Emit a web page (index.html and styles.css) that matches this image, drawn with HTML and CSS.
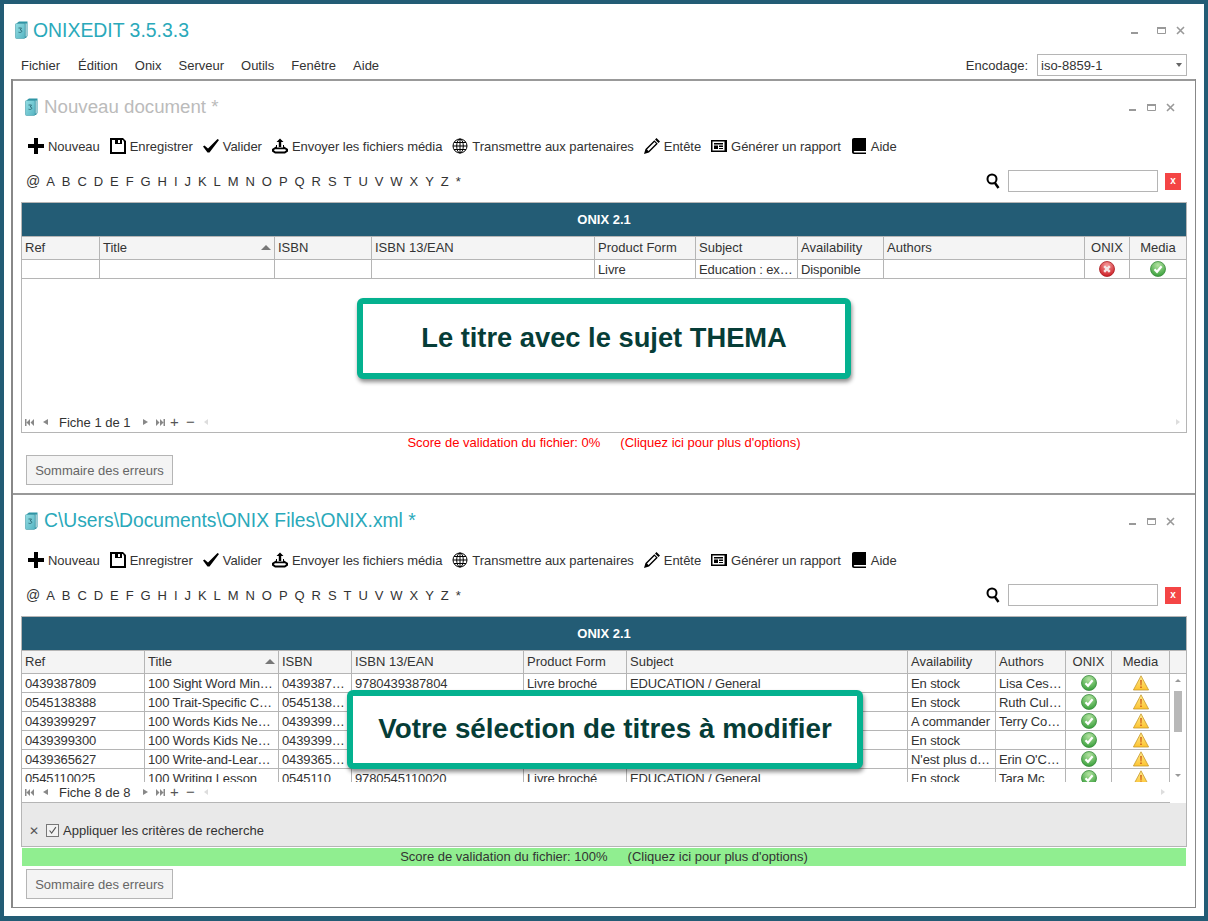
FILE: index.html
```html
<!DOCTYPE html>
<html>
  <head>
    <title>ONIXEDIT 3.5.3.3</title>
    <link rel="stylesheet" href="styles.css">
  </head>
  <body>
    <svg class="defs" width="0" height="0">
      <defs>
        <linearGradient id="book-fill" x1="0" y1="0" x2="1" y2="1"><stop offset="0" stop-color="#93dde3"/><stop offset="1" stop-color="#55b4c2"/></linearGradient>
        <radialGradient id="ok-fill" cx="0.5" cy="0.25" r="0.8"><stop offset="0" stop-color="#b5e4a3"/><stop offset="1" stop-color="#2f9a33"/></radialGradient>
        <radialGradient id="ko-fill" cx="0.5" cy="0.25" r="0.8"><stop offset="0" stop-color="#f59a9a"/><stop offset="1" stop-color="#c9141c"/></radialGradient>
        <linearGradient id="warn-fill" x1="0" y1="0" x2="0" y2="1"><stop offset="0" stop-color="#ffe98a"/><stop offset="1" stop-color="#fdc431"/></linearGradient>
        <symbol id="i-book3" viewBox="0 0 13 18">
          <path d="M2 2 4 .5h8.500V15L11 17H2z" fill="#2f95a5"/>
          <rect x="10.500" y="2.500" width="1.200" height="13" fill="#cfe6e8"/>
          <rect x="0.500" y="2.500" width="9.500" height="15" rx="1" fill="url(#book-fill)" stroke="#4a9dab" stroke-width=".6"/>
          <path d="M3.500 7h3L5.200 9c1.300 0 1.600.6 1.600 1.300 0 1.200-1.900 1.500-3.300.9" fill="none" stroke="#27616c" stroke-width=".8"/>
        </symbol>
        <symbol id="i-min" viewBox="0 0 9 9"><rect x="1" y="6" width="7" height="2" fill="#999"/></symbol>
        <symbol id="i-max" viewBox="0 0 9 9"><path d="M.5 1.500h8v6h-8z" fill="none" stroke="#999"/><rect y="1" width="9" height="2" fill="#999"/></symbol>
        <symbol id="i-close" viewBox="0 0 9 9"><path d="M1 1l7 7M8 1 1 8" stroke="#999" stroke-width="1.600" fill="none"/></symbol>
        <symbol id="i-plus" viewBox="0 0 16 16"><path d="M6 0h4v6h6v4h-6v6H6v-6H0V6h6z"/></symbol>
        <symbol id="i-save" viewBox="0 0 16 16"><path fill-rule="evenodd" d="M0 0h13l3 3v13H0zM2 2v12h12V4l-1-2h-1v4H5V2zM8 2v3h2V2z"/></symbol>
        <symbol id="i-check" viewBox="0 0 16 16"><path d="M0 8.500 1.500 7.500l3.500 3L14.500 1 16 2 6.500 14.500h-2z"/></symbol>
        <symbol id="i-upload" viewBox="0 0 16 16"><path d="M8 0.500l3.500 3.500H9.200v5H6.800V4H4.500z"/><path fill-rule="evenodd" d="M4 7v1.500L0 11v2.500L3 15.500h10l3-2V11l-4-2.500V7H11v2.500H5V7zM3 11.200h10l1.200 1-1.700 1.300h-9l-1.700-1.300z"/></symbol>
        <symbol id="i-globe" viewBox="0 0 16 16"><g fill="none" stroke="#000"><circle cx="8" cy="8" r="7"/><ellipse cx="8" cy="8" rx="3.300" ry="7"/><path d="M8 1v14M1 8h14M2 4.500h12M2 11.500h12"/></g></symbol>
        <symbol id="i-pencil" viewBox="0 0 16 16"><path d="M12.500 0 16 3.500 14.500 5 11 1.500zM10.300 2.200l3.500 3.500L5 14.500 0 16l1.500-5zM3 11.500l1.500 1.500 7.500-7.500L10.500 4z" fill-rule="evenodd"/></symbol>
        <symbol id="i-news" viewBox="0 0 16 16"><path fill-rule="evenodd" d="M0 2h16v12H0zM1.500 3.500v9h12v-9zM3 5h9v1.500H3zM3 7.500h4v3.500H3zM8 7.500h4V9H8zM8 10h4v1H8z"/></symbol>
        <symbol id="i-help" viewBox="0 0 16 16"><path d="M3 0h12v13H3.500c-1 0-1 1.500 0 1.500H15V16H3c-1.200 0-2-.7-2-2V2c0-1.200.8-2 2-2z"/></symbol>
        <symbol id="i-search" viewBox="0 0 15 16"><circle cx="6" cy="6" r="4.500" fill="none" stroke="#000" stroke-width="2"/><path d="M9 10l3.500 5" stroke="#000" stroke-width="2.400"/></symbol>
        <symbol id="i-ok" viewBox="0 0 16 16"><circle cx="8" cy="8" r="7.500" fill="url(#ok-fill)" stroke="#3b8b3d" stroke-width=".8"/><path d="M4.500 8.200 7 10.800l4.600-5.600" fill="none" stroke="#fff" stroke-width="2.200"/></symbol>
        <symbol id="i-ko" viewBox="0 0 16 16"><circle cx="8" cy="8" r="7.500" fill="url(#ko-fill)" stroke="#a81a1f" stroke-width=".8"/><path d="M5.200 5.200l5.600 5.600M10.800 5.200l-5.600 5.600" fill="none" stroke="#f4e6e6" stroke-width="2.400"/></symbol>
        <symbol id="i-warn" viewBox="0 0 16 16"><path d="M8 .8 15.600 15H.4z" fill="url(#warn-fill)" stroke="#c79a2e" stroke-width=".8"/><path d="M7.200 5h1.600l-.3 5.500h-1zM7.200 11.500h1.600V13H7.200z" fill="#d0621c"/></symbol>
        <symbol id="i-first" viewBox="0 0 9 7"><path d="M0 0h1.500v7H0zM5 0v7L1.500 3.500zM9 0v7L5.500 3.500z" fill="#888"/></symbol>
        <symbol id="i-last" viewBox="0 0 9 7"><path d="M9 0H7.500v7H9zM4 0v7l3.500-3.500zM0 0v7l3.500-3.500z" fill="#888"/></symbol>
      </defs>
    </svg>

    <div class="frame">
      <div class="app-title">
        <svg class="book"><use href="#i-book3"/></svg>
        <span class="app-name">ONIXEDIT 3.5.3.3</span>
        <div class="win-btns">
          <svg><use href="#i-min"/></svg>
          <svg><use href="#i-max"/></svg>
          <svg><use href="#i-close"/></svg>
        </div>
      </div>
      <div class="menubar">
        <span>Fichier</span>
        <span>Édition</span>
        <span>Onix</span>
        <span>Serveur</span>
        <span>Outils</span>
        <span>Fenêtre</span>
        <span>Aide</span>
        <label class="encoding">Encodage:</label>
        <div class="select">iso-8859-1</div>
      </div>

      <div class="docs">
        <div class="doc">
          <div class="doc-title">
            <svg class="book"><use href="#i-book3"/></svg>
            <span class="doc-name muted">Nouveau document *</span>
            <div class="win-btns">
              <svg><use href="#i-min"/></svg>
              <svg><use href="#i-max"/></svg>
              <svg><use href="#i-close"/></svg>
            </div>
          </div>
          <div class="toolbar">
            <span class="tool"><svg><use href="#i-plus"/></svg>Nouveau</span>
            <span class="tool"><svg><use href="#i-save"/></svg>Enregistrer</span>
            <span class="tool"><svg><use href="#i-check"/></svg>Valider</span>
            <span class="tool"><svg><use href="#i-upload"/></svg>Envoyer les fichiers média</span>
            <span class="tool"><svg><use href="#i-globe"/></svg>Transmettre aux partenaires</span>
            <span class="tool"><svg><use href="#i-pencil"/></svg>Entête</span>
            <span class="tool"><svg><use href="#i-news"/></svg>Générer un rapport</span>
            <span class="tool"><svg><use href="#i-help"/></svg>Aide</span>
          </div>
          <div class="alpha">
            <span class="at">@</span><span>A</span><span>B</span><span>C</span><span>D</span><span>E</span><span>F</span><span>G</span><span>H</span><span>I</span><span>J</span><span>K</span><span>L</span><span>M</span><span>N</span><span>O</span><span>P</span><span>Q</span><span>R</span><span>S</span><span>T</span><span>U</span><span>V</span><span>W</span><span>X</span><span>Y</span><span>Z</span><span>*</span>
            <svg class="search-icon"><use href="#i-search"/></svg>
            <div class="search-box"></div>
            <div class="search-clear">x</div>
          </div>
          <div class="grid">
            <div class="grid-band">ONIX 2.1</div>
            <div class="grid-body">
              <table class="table-one">
                <colgroup><col class="a1"><col class="a2"><col class="a3"><col class="a4"><col class="a5"><col class="a6"><col class="a7"><col class="a8"><col class="a9"><col class="a10"></colgroup>
                <thead>
                  <tr><th>Ref</th><th class="sorted">Title</th><th>ISBN</th><th>ISBN 13/EAN</th><th>Product Form</th><th>Subject</th><th>Availability</th><th>Authors</th><th class="mid">ONIX</th><th class="mid">Media</th></tr>
                </thead>
                <tbody>
                  <tr><td></td><td></td><td></td><td></td><td>Livre</td><td>Education : examens</td><td>Disponible</td><td></td><td class="mid"><svg class="state"><use href="#i-ko"/></svg></td><td class="mid"><svg class="state"><use href="#i-ok"/></svg></td></tr>
                </tbody>
              </table>
            </div>
            <div class="pager">
              <svg class="nav"><use href="#i-first"/></svg>
              <span class="tri-left"></span>
              <span class="pager-text">Fiche 1 de 1</span>
              <span class="tri-right"></span>
              <svg class="nav"><use href="#i-last"/></svg>
              <span class="pager-sign">+</span>
              <span class="pager-sign">−</span>
              <span class="tri-left faint"></span>
              <span class="tri-right faint end"></span>
            </div>
          </div>
          <div class="score score-bad"><span>Score de validation du fichier: 0%</span><span>(Cliquez ici pour plus d'options)</span></div>
          <button class="summary">Sommaire des erreurs</button>
          <div class="callout callout-one">Le titre avec le sujet THEMA</div>
        </div>

        <div class="doc">
          <div class="doc-title">
            <svg class="book"><use href="#i-book3"/></svg>
            <span class="doc-name">C\Users\Documents\ONIX Files\ONIX.xml *</span>
            <div class="win-btns">
              <svg><use href="#i-min"/></svg>
              <svg><use href="#i-max"/></svg>
              <svg><use href="#i-close"/></svg>
            </div>
          </div>
          <div class="toolbar">
            <span class="tool"><svg><use href="#i-plus"/></svg>Nouveau</span>
            <span class="tool"><svg><use href="#i-save"/></svg>Enregistrer</span>
            <span class="tool"><svg><use href="#i-check"/></svg>Valider</span>
            <span class="tool"><svg><use href="#i-upload"/></svg>Envoyer les fichiers média</span>
            <span class="tool"><svg><use href="#i-globe"/></svg>Transmettre aux partenaires</span>
            <span class="tool"><svg><use href="#i-pencil"/></svg>Entête</span>
            <span class="tool"><svg><use href="#i-news"/></svg>Générer un rapport</span>
            <span class="tool"><svg><use href="#i-help"/></svg>Aide</span>
          </div>
          <div class="alpha">
            <span class="at">@</span><span>A</span><span>B</span><span>C</span><span>D</span><span>E</span><span>F</span><span>G</span><span>H</span><span>I</span><span>J</span><span>K</span><span>L</span><span>M</span><span>N</span><span>O</span><span>P</span><span>Q</span><span>R</span><span>S</span><span>T</span><span>U</span><span>V</span><span>W</span><span>X</span><span>Y</span><span>Z</span><span>*</span>
            <svg class="search-icon"><use href="#i-search"/></svg>
            <div class="search-box"></div>
            <div class="search-clear">x</div>
          </div>
          <div class="grid">
            <div class="grid-band">ONIX 2.1</div>
            <div class="grid-body">
              <table class="table-two">
                <colgroup><col class="b1"><col class="b2"><col class="b3"><col class="b4"><col class="b5"><col class="b6"><col class="b7"><col class="b8"><col class="b9"><col class="b10"></colgroup>
                <thead>
                  <tr><th>Ref</th><th class="sorted">Title</th><th>ISBN</th><th>ISBN 13/EAN</th><th>Product Form</th><th>Subject</th><th>Availability</th><th>Authors</th><th class="mid">ONIX</th><th class="mid">Media</th></tr>
                </thead>
                <tbody>
                  <tr><td>0439387809</td><td>100 Sight Word Mini-Books</td><td>0439387809</td><td>9780439387804</td><td>Livre broché</td><td>EDUCATION / General</td><td>En stock</td><td>Lisa Cestnik</td><td class="mid"><svg class="state"><use href="#i-ok"/></svg></td><td class="mid"><svg class="state"><use href="#i-warn"/></svg></td></tr>
                  <tr><td>0545138388</td><td>100 Trait-Specific Comments</td><td>0545138388</td><td></td><td></td><td></td><td>En stock</td><td>Ruth Culham</td><td class="mid"><svg class="state"><use href="#i-ok"/></svg></td><td class="mid"><svg class="state"><use href="#i-warn"/></svg></td></tr>
                  <tr><td>0439399297</td><td>100 Words Kids Need to Read</td><td>0439399297</td><td></td><td></td><td></td><td>A commander</td><td>Terry Cooper</td><td class="mid"><svg class="state"><use href="#i-ok"/></svg></td><td class="mid"><svg class="state"><use href="#i-warn"/></svg></td></tr>
                  <tr><td>0439399300</td><td>100 Words Kids Need to Read</td><td>0439399300</td><td></td><td></td><td></td><td>En stock</td><td></td><td class="mid"><svg class="state"><use href="#i-ok"/></svg></td><td class="mid"><svg class="state"><use href="#i-warn"/></svg></td></tr>
                  <tr><td>0439365627</td><td>100 Write-and-Learn Sight</td><td>0439365627</td><td></td><td></td><td></td><td>N'est plus disponible</td><td>Erin O'Connor</td><td class="mid"><svg class="state"><use href="#i-ok"/></svg></td><td class="mid"><svg class="state"><use href="#i-warn"/></svg></td></tr>
                  <tr><td>0545110025</td><td>100 Writing Lesson</td><td>0545110</td><td>9780545110020</td><td>Livre broché</td><td>EDUCATION / General</td><td>En stock</td><td>Tara Mc</td><td class="mid"><svg class="state"><use href="#i-ok"/></svg></td><td class="mid"><svg class="state"><use href="#i-warn"/></svg></td></tr>
                </tbody>
              </table>
              <div class="vscroll">
                <div class="vscroll-head"></div>
                <div class="vscroll-track">
                  <span class="arrow-up"></span>
                  <div class="vscroll-thumb"></div>
                  <span class="arrow-down"></span>
                </div>
              </div>
            </div>
            <div class="pager">
              <svg class="nav"><use href="#i-first"/></svg>
              <span class="tri-left"></span>
              <span class="pager-text">Fiche 8 de 8</span>
              <span class="tri-right"></span>
              <svg class="nav"><use href="#i-last"/></svg>
              <span class="pager-sign">+</span>
              <span class="pager-sign">−</span>
              <span class="tri-left faint"></span>
              <span class="tri-right faint end short"></span>
            </div>
            <div class="filter">
              <span class="filter-x">✕</span>
              <span class="checkbox"><svg viewBox="0 0 13 13"><path d="M3 6.500 5.500 9.500 10.500 2.500" fill="none" stroke="#555" stroke-width="1.300"/></svg></span>
              <span>Appliquer les critères de recherche</span>
            </div>
          </div>
          <div class="score score-good"><span>Score de validation du fichier: 100%</span><span>(Cliquez ici pour plus d'options)</span></div>
          <button class="summary">Sommaire des erreurs</button>
          <div class="callout callout-two">Votre sélection de titres à modifier</div>
        </div>
      </div>
    </div>
  </body>
</html>
```

FILE: styles.css
```css
* {
  box-sizing: border-box;
}

html,
body {
  margin: 0;
  padding: 0;
}

body {
  width: 1208px;
  height: 921px;
  overflow: hidden;
  background: #fff;
  font-family: "Liberation Sans", Arial, sans-serif;
  font-size: 13px;
  color: #333;
}

.defs {
  position: absolute;
}

.frame {
  height: 921px;
  border: 4px solid #235c75;
  border-bottom-width: 5px;
  padding: 0 8px 0 7px;
}

/* title rows */

.app-title,
.doc-title {
  display: flex;
  align-items: center;
}

.app-title {
  height: 50px;
  padding: 2px 11px 0 4px;
}

.app-title .win-btns svg:first-child {
  margin-right: 8px;
}

.app-name {
  margin-left: 5px;
  font-size: 19.4px;
  color: #2aa9ba;
}

.doc-title {
  height: 52px;
  padding: 0 20px 0 12px;
}

.doc-name {
  margin-left: 6px;
  font-size: 19.3px;
  color: #2aa9ba;
}

.doc-name.muted {
  font-size: 18.7px;
  color: #bbb;
}

.book {
  width: 13px;
  height: 18px;
}

.win-btns {
  display: flex;
  gap: 10px;
  margin-left: auto;
}

.win-btns svg {
  width: 9px;
  height: 9px;
}

/* menu */

.menubar {
  display: flex;
  align-items: flex-start;
  height: 25px;
  padding-left: 10px;
  gap: 17px;
}

.menubar span {
  line-height: 24px;
}

.menubar span:first-child {
  margin-right: 1px;
}

.encoding {
  margin-left: auto;
  margin-right: -8px;
  line-height: 24px;
}

.select {
  position: relative;
  width: 150px;
  height: 22px;
  margin-right: 9px;
  border: 1px solid #b5b5b5;
  padding-left: 3px;
  line-height: 22px;
}

.select:after {
  content: "";
  position: absolute;
  top: 8px;
  right: 4px;
  border: 3px solid transparent;
  border-top: 4px solid #666;
}

/* document panels */

.docs {
  border: 2px solid #888;
  border-top: 0;
  border-right-width: 1px;
  border-bottom-width: 1px;
  width: 1185px;
}

.doc {
  position: relative;
  height: 414px;
  border-top: 2px solid #999;
}

.toolbar {
  display: flex;
  align-items: center;
  gap: 10px;
  height: 26px;
  padding-left: 15px;
  letter-spacing: -0.05px;
}

.tool {
  display: flex;
  align-items: center;
  gap: 4px;
}

.tool svg {
  width: 16px;
  height: 16px;
}

.alpha {
  display: flex;
  align-items: center;
  gap: 6.950px;
  height: 26px;
  margin-top: 9px;
  padding: 0 14px 0 13px;
}

.alpha .at {
  margin-right: -1px;
  font-size: 14px;
}

.search-icon {
  width: 15px;
  height: 16px;
  margin-left: auto;
}

.search-box {
  width: 150px;
  height: 22px;
  border: 1px solid #b5b5b5;
}

.search-clear {
  width: 16px;
  height: 17px;
  background: #f44545;
  color: #fff;
  font-size: 10px;
  font-weight: bold;
  line-height: 16px;
  text-align: center;
}

/* grid */

.grid {
  display: flex;
  flex-direction: column;
  height: 231px;
  margin: 8px 8px 0 8px;
  border: 1px solid #b5b5b5;
}

.grid-band {
  flex: none;
  height: 34px;
  border-bottom: 1px solid #b5b5b5;
  background: #235c75;
  color: #fff;
  font-weight: bold;
  line-height: 33px;
  text-align: center;
}

.grid-body {
  display: flex;
  flex: 1;
  min-height: 0;
  overflow: hidden;
}

table {
  flex: none;
  align-self: flex-start;
  border-collapse: separate;
  border-spacing: 0;
  table-layout: fixed;
}

.table-one {
  width: 1164px;
}

.table-two {
  width: 1148px;
}

.a1 { width: 78px; }
.a2 { width: 175px; }
.a3 { width: 97px; }
.a4 { width: 223px; }
.a5 { width: 101px; }
.a6 { width: 102px; }
.a7 { width: 86px; }
.a8 { width: 201px; }
.a9 { width: 45px; }
.a10 { width: 56px; }

.b1 { width: 123px; }
.b2 { width: 134px; }
.b3 { width: 73px; }
.b4 { width: 172px; }
.b5 { width: 103px; }
.b6 { width: 281px; }
.b7 { width: 88px; }
.b8 { width: 70px; }
.b9 { width: 46px; }
.b10 { width: 58px; }

th,
td {
  overflow: hidden;
  border-right: 1px solid #b5b5b5;
  border-bottom: 1px solid #b5b5b5;
  padding: 0 3px;
  font-weight: normal;
  text-align: left;
  text-overflow: ellipsis;
  white-space: nowrap;
}

.table-one th:last-child,
.table-one td:last-child {
  border-right: 0;
}

th {
  height: 23px;
  padding-bottom: 2px;
  background: #f4f4f4;
}

td {
  height: 19px;
  padding-top: 1px;
  letter-spacing: -0.120px;
}

.mid {
  padding: 0;
  text-align: center;
}

th.mid {
  padding-bottom: 2px;
}

.sorted {
  position: relative;
}

.sorted:after {
  content: "";
  position: absolute;
  top: 8px;
  right: 3px;
  border: 5px solid transparent;
  border-top: 0;
  border-bottom: 5px solid #777;
}

.state {
  display: block;
  width: 16px;
  height: 16px;
  margin: 0 auto;
}

.vscroll {
  flex: 1;
}

.vscroll-head {
  height: 23px;
  border-bottom: 1px solid #b5b5b5;
  background: #f4f4f4;
}

.vscroll-track {
  position: relative;
  height: 108px;
}

.vscroll-thumb {
  position: absolute;
  top: 17px;
  left: 4px;
  width: 8px;
  height: 41px;
  background: #b8b8b8;
}

.arrow-up,
.arrow-down {
  position: absolute;
  left: 5px;
  border: 3px solid transparent;
}

.arrow-up {
  top: 5px;
  border-top: 0;
  border-bottom: 3px solid #999;
}

.arrow-down {
  bottom: 5px;
  border-bottom: 0;
  border-top: 3px solid #999;
}

/* pager */

.pager {
  display: flex;
  flex: none;
  align-items: center;
  height: 20px;
  padding-left: 3px;
}

.nav {
  width: 9px;
  height: 7px;
}

.tri-left,
.tri-right {
  width: 0;
  height: 0;
  border-top: 3.500px solid transparent;
  border-bottom: 3.500px solid transparent;
}

.tri-left {
  margin-left: 9px;
  border-right: 5px solid #888;
}

.tri-right {
  margin-right: 8px;
  border-left: 5px solid #888;
}

.tri-left.faint {
  margin-left: 7px;
  border-right: 4px solid #ddd;
}

.tri-right.faint {
  border-left: 4px solid #ddd;
}

.tri-right.end {
  margin-left: auto;
  margin-right: 6px;
}

.tri-right.short {
  margin-right: 21px;
}

.pager-text {
  flex: none;
  width: 95px;
  padding-left: 11px;
}

.pager-sign {
  width: 8px;
  margin-left: 5px;
  margin-right: 3px;
  color: #555;
  font-size: 15px;
  line-height: 14px;
  text-align: center;
}

.filter {
  position: relative;
  display: flex;
  flex: none;
  align-items: center;
  gap: 4px;
  height: 44px;
  padding: 12px 0 0 7px;
  border-top: 1px solid #fff;
  background: #e9e9e9;
}

.filter:before {
  content: "";
  position: absolute;
  top: -1px;
  left: 0;
  width: 1148px;
  height: 1px;
  background: #b5b5b5;
}

.filter-x {
  width: 11px;
  margin-right: 2px;
  color: #555;
  font-size: 12px;
}

.checkbox {
  width: 13px;
  height: 13px;
  border: 1px solid #777;
  background: #f2f2f2;
}

.checkbox svg {
  display: block;
  width: 11px;
  height: 11px;
}

/* footer of a document */

.score {
  display: flex;
  justify-content: center;
  gap: 20px;
  height: 18px;
  margin: 1px 9px 3px 9px;
  line-height: 18px;
}

.score-bad {
  color: #f00;
}

.score-good {
  background: #90ee90;
}

.summary {
  display: block;
  width: 147px;
  height: 30px;
  margin-left: 13px;
  border: 1px solid #b5b5b5;
  padding: 0;
  background: #f4f4f4;
  color: #666;
  font-family: inherit;
  font-size: 13px;
}

/* annotations laid over the screenshot */

.callout {
  position: absolute;
  border: 6px solid #04b18f;
  border-radius: 6px;
  background: #fff;
  box-shadow: 1px 3px 4px rgba(0, 0, 0, 0.45);
  color: #063d37;
  font-weight: bold;
  text-align: center;
}

.callout-one {
  top: 217px;
  left: 344px;
  width: 494px;
  height: 81px;
  font-size: 27.300px;
  line-height: 67px;
}

.callout-two {
  top: 195px;
  left: 334px;
  width: 516px;
  height: 79px;
  font-size: 27.800px;
  line-height: 65px;
}
```
